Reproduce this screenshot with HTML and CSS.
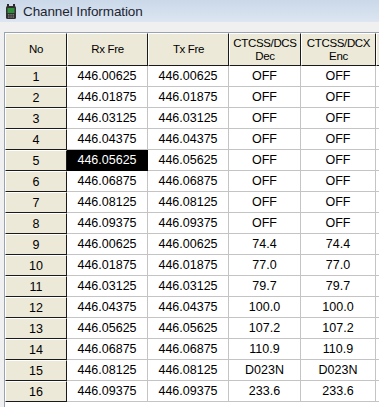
FILE: index.html
```html
<!DOCTYPE html>
<html>
<head>
<meta charset="utf-8">
<link rel="stylesheet" href="styles.css">
</head>
<body>
<div class="titlebar">
  <svg class="appicon" width="10" height="15" viewBox="0 0 10 15">
    <rect x="1" y="0" width="2" height="3" fill="#2a2a2a"/>
    <rect x="7" y="0" width="2" height="3" fill="#2a2a2a"/>
    <rect x="0" y="2" width="10" height="13" rx="1.5" fill="#303030"/>
    <rect x="1.5" y="4" width="7" height="5" fill="#2f8f3a"/>
    <rect x="2" y="10" width="1.5" height="1.5" fill="#777"/>
    <rect x="4.3" y="10" width="1.5" height="1.5" fill="#777"/>
    <rect x="6.5" y="10" width="1.5" height="1.5" fill="#777"/>
    <rect x="2" y="12.3" width="1.5" height="1.5" fill="#777"/>
    <rect x="4.3" y="12.3" width="1.5" height="1.5" fill="#777"/>
    <rect x="6.5" y="12.3" width="1.5" height="1.5" fill="#777"/>
  </svg>
  <span class="title">Channel Information</span>
</div>
<div class="content">
  <div class="gridwrap">
    <table class="grid">
      <colgroup>
        <col class="c-no"><col class="c-fr"><col class="c-fr"><col class="c-dec"><col class="c-enc"><col class="c-x">
      </colgroup>
      <thead>
        <tr>
          <th class="hdr">No</th>
          <th class="hdr">Rx Fre</th>
          <th class="hdr">Tx Fre</th>
          <th class="hdr">CTCSS/DCS<br>Dec</th>
          <th class="hdr">CTCSS/DCX<br>Enc</th>
          <th class="hdr"></th>
        </tr>
      </thead>
      <tbody>
        <tr><td class="rh">1</td><td>446.00625</td><td>446.00625</td><td>OFF</td><td>OFF</td><td></td></tr>
        <tr><td class="rh">2</td><td>446.01875</td><td>446.01875</td><td>OFF</td><td>OFF</td><td></td></tr>
        <tr><td class="rh">3</td><td>446.03125</td><td>446.03125</td><td>OFF</td><td>OFF</td><td></td></tr>
        <tr><td class="rh">4</td><td>446.04375</td><td>446.04375</td><td>OFF</td><td>OFF</td><td></td></tr>
        <tr><td class="rh">5</td><td class="sel">446.05625</td><td>446.05625</td><td>OFF</td><td>OFF</td><td></td></tr>
        <tr><td class="rh">6</td><td>446.06875</td><td>446.06875</td><td>OFF</td><td>OFF</td><td></td></tr>
        <tr><td class="rh">7</td><td>446.08125</td><td>446.08125</td><td>OFF</td><td>OFF</td><td></td></tr>
        <tr><td class="rh">8</td><td>446.09375</td><td>446.09375</td><td>OFF</td><td>OFF</td><td></td></tr>
        <tr><td class="rh">9</td><td>446.00625</td><td>446.00625</td><td>74.4</td><td>74.4</td><td></td></tr>
        <tr><td class="rh">10</td><td>446.01875</td><td>446.01875</td><td>77.0</td><td>77.0</td><td></td></tr>
        <tr><td class="rh">11</td><td>446.03125</td><td>446.03125</td><td>79.7</td><td>79.7</td><td></td></tr>
        <tr><td class="rh">12</td><td>446.04375</td><td>446.04375</td><td>100.0</td><td>100.0</td><td></td></tr>
        <tr><td class="rh">13</td><td>446.05625</td><td>446.05625</td><td>107.2</td><td>107.2</td><td></td></tr>
        <tr><td class="rh">14</td><td>446.06875</td><td>446.06875</td><td>110.9</td><td>110.9</td><td></td></tr>
        <tr><td class="rh">15</td><td>446.08125</td><td>446.08125</td><td>D023N</td><td>D023N</td><td></td></tr>
        <tr><td class="rh">16</td><td>446.09375</td><td>446.09375</td><td>233.6</td><td>233.6</td><td></td></tr>
      </tbody>
    </table>
  </div>
</div>
</body>
</html>
```
FILE: styles.css
```css
html, body {
  margin: 0;
  padding: 0;
  width: 379px;
  height: 407px;
  overflow: hidden;
  background: #f0f0f0;
  font-family: "Liberation Sans", Arial, sans-serif;
}
.titlebar {
  height: 22px;
  display: flex;
  align-items: center;
  padding-left: 6px;
  background: linear-gradient(#cad8e9, #dde6f1);
  box-sizing: border-box;
}
.appicon {
  flex: none;
  margin-top: 1px;
}
.title {
  margin-left: 7px;
  font-size: 13.5px;
  color: #1c2530;
  letter-spacing: -0.1px;
}
.content {
  padding: 10px 0 0 4px;
}
.gridwrap {
  height: 375px;
  overflow: hidden;
  background: #fff;
  border-left: 1px solid #9aa4b0;
  border-top: 1px solid #9aa4b0;
}
.grid {
  border-collapse: separate;
  border-spacing: 0;
  table-layout: fixed;
  width: 432px;
}
.c-no { width: 62px; }
.c-fr { width: 81px; }
.c-dec { width: 72px; }
.c-enc { width: 75px; }
.c-x { width: 61px; }
.hdr {
  height: 33px;
  box-sizing: border-box;
  padding: 0;
  background: #ece9d8;
  border-top: 1px solid #fff;
  border-left: 1px solid #fff;
  border-right: 1px solid #1a1a1a;
  border-bottom: 1px solid #1a1a1a;
  font-family: "Liberation Sans", Arial, sans-serif;
  font-weight: normal;
  font-size: 11.5px;
  letter-spacing: -0.35px;
  line-height: 13px;
  color: #000;
  text-align: center;
  vertical-align: middle;
}
.grid td {
  height: 21px;
  box-sizing: border-box;
  padding: 0;
  border-right: 1px solid #c4c4c4;
  border-bottom: 1px solid #c4c4c4;
  font-size: 12.5px;
  color: #000;
  text-align: center;
  vertical-align: middle;
  white-space: nowrap;
}
.grid td.rh {
  background: #ece9d8;
  border-top: 1px solid #fff;
  border-left: 1px solid #fff;
  border-right: 1px solid #1a1a1a;
  border-bottom: 1px solid #1a1a1a;
}
.grid td.sel {
  background: #000;
  color: #fff;
  border-right-color: #000;
  border-bottom-color: #000;
}
```
